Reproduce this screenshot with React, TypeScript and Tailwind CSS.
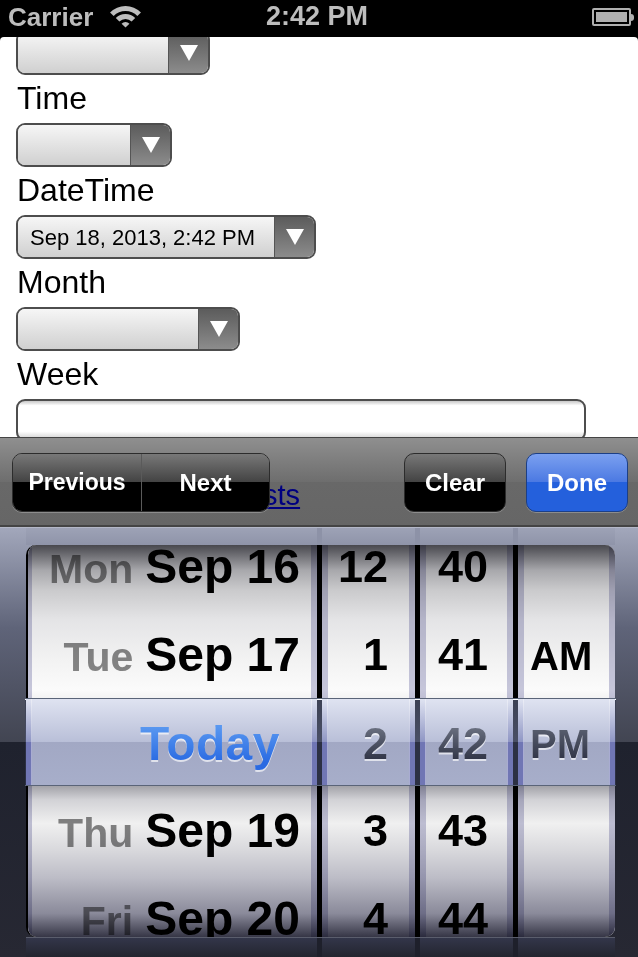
import type { ReactNode } from 'react';

const font = "font-['Liberation_Sans',Arial,sans-serif]";

function SelectBox({ width, value }: { width: string; value?: string }) {
  return (
    <div className={`flex h-11 ${width} overflow-hidden rounded-[9px] border-2 border-[#4d4d4d]`}>
      <div className="flex flex-1 items-center bg-gradient-to-b from-[#f6f6f6] to-[#d0d0d0] pl-3 text-[22px] text-black">
        {value}
      </div>
      <div className="flex w-[40px] items-center justify-center border-l border-[#555] bg-gradient-to-b from-[#5c5c5c] to-[#8c8c8c]">
        <svg width="20" height="18" viewBox="0 0 20 18">
          <path d="M1 1h18L10 17z" fill="#fff" />
        </svg>
      </div>
    </div>
  );
}

function Label({ children }: { children: string }) {
  return <div className="flex h-12 items-center pb-[2px] pl-px text-[32px] leading-none text-black">{children}</div>;
}

function BarButton({ children, className }: { children: string; className: string }) {
  return (
    <div className={`flex items-center justify-center font-bold text-white ${className}`}>
      {children}
    </div>
  );
}

const darkButton = 'bg-[linear-gradient(#787878_0%,#424242_50%,#000_50%,#000_100%)]';

type Row = { day?: string; date?: string; hour: string; min: string; ampm?: string };

const rows: Row[] = [
  { day: 'Mon', date: 'Sep 16', hour: '12', min: '40' },
  { day: 'Tue', date: 'Sep 17', hour: '1', min: '41', ampm: 'AM' },
  { hour: '', min: '' },
  { day: 'Thu', date: 'Sep 19', hour: '3', min: '43' },
  { day: 'Fri', date: 'Sep 20', hour: '4', min: '44' },
];

function Cell({ className, children }: { className?: string; children?: ReactNode }) {
  return (
    <div className={`h-[88px] whitespace-nowrap text-right text-[45px] font-bold leading-[88px] text-black ${className ?? ''}`}>
      {children}
    </div>
  );
}

function Wheel({ width, children }: { width: string; children: ReactNode }) {
  return (
    <div className={`relative h-full ${width} overflow-hidden bg-white`}>
      <div className="absolute inset-y-0 left-0 w-[6px] bg-[#c9c9de]" />
      <div className="absolute inset-y-0 right-0 w-[6px] bg-[#c9c9de]" />
      <div className="relative -mt-[22px]">{children}</div>
    </div>
  );
}

// strip of glass above and below the wheels, the columns still show through faintly
function GlassStrip({ className, col, height }: { className: string; col: string; height: string }) {
  return (
    <div className={`ml-[26px] flex w-[589px] gap-[5px] ${height} ${className}`}>
      <div className={`w-[291px] ${col}`} />
      <div className={`w-[93px] ${col}`} />
      <div className={`w-[93px] ${col}`} />
      <div className={`flex-1 ${col}`} />
    </div>
  );
}

function BarColumn({ width, children }: { width: string; children?: ReactNode }) {
  return (
    <div className={`relative h-full ${width} bg-[linear-gradient(#dfe3f1_0%,#b9bfd8_50%,#a2a8c4_50%,#a7aeca_100%)]`}>
      <div className="absolute inset-y-0 left-0 w-[6px] border-r border-white/40 bg-[linear-gradient(#dfe3f1_0%,#8f96c4_50%,#7076b4_50%,#7076b4_100%)]" />
      <div className="absolute inset-y-0 right-0 w-[6px] border-l border-white/40 bg-[linear-gradient(#dfe3f1_0%,#8f96c4_50%,#7076b4_50%,#7076b4_100%)]" />
      {children}
    </div>
  );
}

function BarText({ className, children }: { className: string; children: string }) {
  return (
    <div className={`absolute top-0 whitespace-nowrap bg-clip-text font-bold leading-[90px] text-transparent drop-shadow-[0_2px_0_rgba(255,255,255,0.65)] ${className}`}>
      {children}
    </div>
  );
}

export default function App() {
  return (
    <div className={`relative h-[957px] w-[638px] overflow-hidden bg-black ${font}`}>
      {/* Status bar */}
      <div className="relative flex h-[37px] items-center bg-black px-2 pb-1 text-[#bdbdbd]">
        <span className="text-[26px] font-bold leading-none">Carrier</span>
        <svg className="ml-[17px]" width="31" height="23" viewBox="0 0 31 23" fill="#bdbdbd">
          <path d="M0.04 7.56A21.5 21.5 0 0 1 30.96 7.56L27.36 11.03A16.5 16.5 0 0 0 3.64 11.03Z" />
          <path d="M5.79 13.12A13.5 13.5 0 0 1 25.21 13.12L21.61 16.59A8.5 8.5 0 0 0 9.39 16.59Z" />
          <path d="M11.55 18.68A5.5 5.5 0 0 1 19.45 18.68L15.5 22.5Z" />
        </svg>
        <span className="absolute left-[266px] text-[27px] font-bold leading-none">2:42 PM</span>
        <div className="absolute left-[592px] top-[8px] flex items-center">
          <div className="h-[18px] w-[39px] rounded-[2px] border-2 border-[#b0b0b0] p-[2px]">
            <div className="h-full w-full bg-[#b0b0b0]" />
          </div>
          <div className="h-[7px] w-[3px] rounded-r-sm bg-[#b0b0b0]" />
        </div>
      </div>

      {/* Page */}
      <div className="h-[400px] overflow-hidden rounded-t-[4px] bg-white pl-4">
        <div className="-mt-[6px]">
          <SelectBox width="w-[194px]" />
        </div>
        <Label>Time</Label>
        <SelectBox width="w-[156px]" />
        <Label>DateTime</Label>
        <SelectBox width="w-[300px]" value="Sep 18, 2013, 2:42 PM" />
        <Label>Month</Label>
        <SelectBox width="w-[224px]" />
        <Label>Week</Label>
        <div className="h-[42px] w-[570px] rounded-[9px] border-2 border-[#4d4d4d] bg-[linear-gradient(#c8c8c8_0%,#fff_12%,#fff_80%,#d0d0d0_100%)]" />
      </div>

      {/* Toolbar over the page */}
      <div className="absolute inset-x-0 top-[437px] flex h-[90px] items-start justify-between border-t border-b-[2px] border-[#444] bg-[linear-gradient(#8f8f8f_0%,#6e6e6e_50%,#686868_50%,#666_100%)] pl-3 pr-[10px] pt-[15px]">
        <span className="absolute left-[263px] top-[43px] text-[29px] leading-none text-[#000080] underline">sts</span>
        <div className="relative flex h-[59px] w-[258px] overflow-hidden rounded-[10px] border border-[#2c2c2c] shadow-[0_1px_0_rgba(255,255,255,0.25)]">
          <BarButton className={`h-full w-[129px] border-r border-[#5a5a5a] text-[23px] ${darkButton}`}>Previous</BarButton>
          <BarButton className={`h-full flex-1 text-[24px] ${darkButton}`}>Next</BarButton>
        </div>
        <div className="relative flex gap-5">
          <BarButton className={`h-[59px] w-[102px] overflow-hidden rounded-[10px] border border-[#2c2c2c] text-[24px] shadow-[0_1px_0_rgba(255,255,255,0.25)] ${darkButton}`}>Clear</BarButton>
          <BarButton className="h-[59px] w-[102px] overflow-hidden rounded-[10px] border border-[#1c3f86] bg-[linear-gradient(#7ba0f0_0%,#4a78e2_50%,#2460dc_50%,#2460dc_100%)] text-[24px] shadow-[0_1px_0_rgba(255,255,255,0.25)]">Done</BarButton>
        </div>
      </div>

      {/* Picker */}
      <div className="absolute inset-x-0 bottom-0 top-[527px] border-t border-[#b4b8c8] bg-[linear-gradient(#a2a7bb_0,#5f6479_100px,#424552_214px,#1f222e_214px,#272833_430px)]">
        <GlassStrip height="h-[17px]" className="bg-[#8d92a7]" col="bg-[linear-gradient(#9da2b6,#8f94a9)]" />

        <div className="relative ml-[26px] h-[392px] w-[589px] overflow-hidden rounded-[10px] border-l-2 border-black bg-black">
          <div className="-ml-[2px] flex h-full gap-[5px]">
            <Wheel width="w-[291px]">
              {rows.map((r, i) => (
                <Cell key={i} className="pr-[17px]">
                  {r.day && <span className="mr-[12px] text-[41px] text-[#888]">{r.day}</span>}
                  <span className="text-[48px]">{r.date}</span>
                </Cell>
              ))}
            </Wheel>
            <Wheel width="w-[93px]">
              {rows.map((r, i) => (
                <Cell key={i} className="pr-[27px]">{r.hour}</Cell>
              ))}
            </Wheel>
            <Wheel width="w-[93px]">
              {rows.map((r, i) => (
                <Cell key={i} className="pr-[25px]">{r.min}</Cell>
              ))}
            </Wheel>
            <Wheel width="flex-1">
              {rows.map((r, i) => (
                <Cell key={i} className="pl-[12px] !text-left">
                  <span className="text-[40px]">{r.ampm}</span>
                </Cell>
              ))}
            </Wheel>
          </div>
          {/* shading of the drum */}
          <div className="absolute inset-0 bg-[linear-gradient(#48484e_0%,#a8a8ac_6.5%,#cacacc_11.5%,#e4e4e6_19%,#f2f2f2_29%,#fbfbfb_37%,#9c9ca2_61%,#d2d2d6_65%,#f0f0f0_71%,#d8d8dc_78%,#bcbcc6_85%,#8a8a9a_94%,#363646_100%)] mix-blend-multiply" />
        </div>

        <GlassStrip height="h-[20px]" className="border-t border-[#5a5d6c] bg-[#1e202b]" col="bg-[linear-gradient(#33364a,#23252f)]" />

        {/* Selection bar */}
        <div className="absolute left-[25px] top-[170px] flex h-[88px] w-[591px] gap-[5px] border-y border-y-[#5a6478] bg-[linear-gradient(#3c4154_0%,#4a4f66_50%,#2c3044_50%,#2c3044_100%)] px-px shadow-[inset_0_1px_0_#fff]">
          <BarColumn width="w-[291px]">
            <BarText className="left-[114px] bg-gradient-to-b from-[#5a98f0] from-30% to-[#2a6ae2] to-70% text-[48px] tracking-[0.4px]">Today</BarText>
          </BarColumn>
          <BarColumn width="w-[93px]">
            <BarText className="right-[27px] bg-gradient-to-b from-[#6c7282] from-30% to-[#2e3244] to-70% text-[45px]">2</BarText>
          </BarColumn>
          <BarColumn width="w-[93px]">
            <BarText className="right-[25px] bg-gradient-to-b from-[#6c7282] from-30% to-[#2e3244] to-70% text-[45px]">42</BarText>
          </BarColumn>
          <BarColumn width="flex-1">
            <BarText className="left-[12px] bg-gradient-to-b from-[#5c6272] from-30% to-[#2e3244] to-70% text-[40px]">PM</BarText>
          </BarColumn>
        </div>
      </div>
    </div>
  );
}
